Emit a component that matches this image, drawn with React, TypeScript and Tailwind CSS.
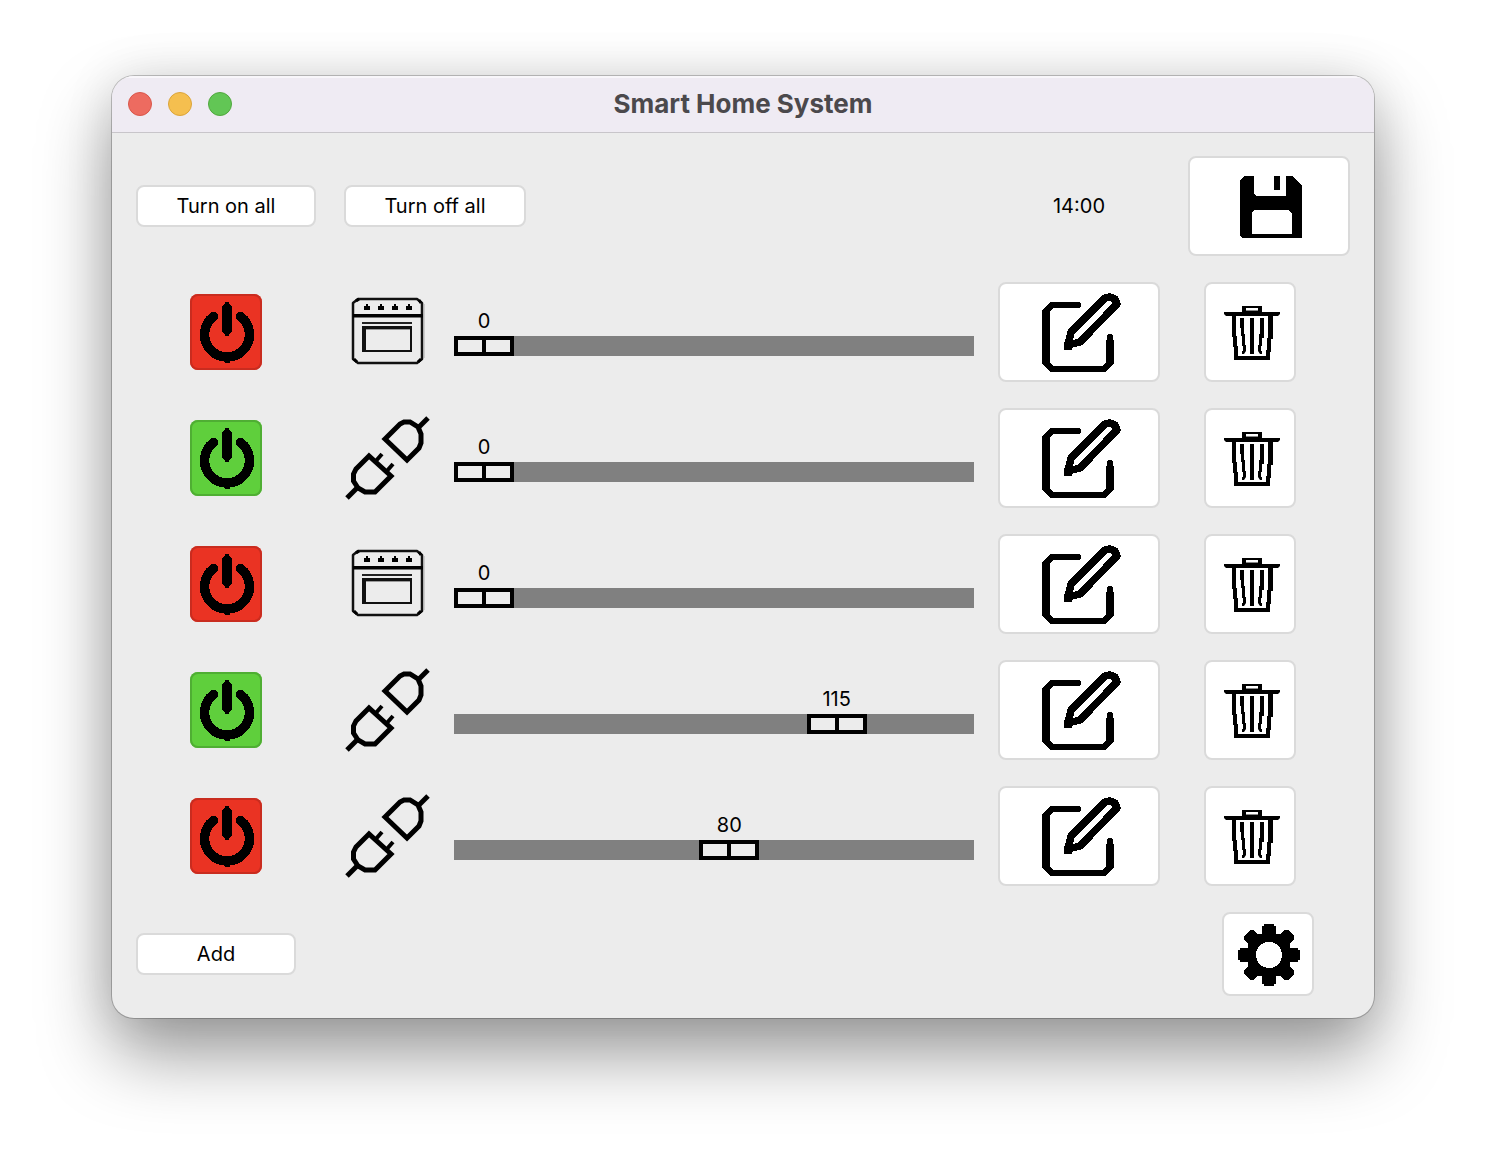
import { useState } from "react";

type Device = { id: number; kind: "oven" | "plug"; on: boolean; value: number };

const MAX = 150;

const INITIAL: Device[] = [
  { id: 1, kind: "oven", on: false, value: 0 },
  { id: 2, kind: "plug", on: true, value: 0 },
  { id: 3, kind: "oven", on: false, value: 0 },
  { id: 4, kind: "plug", on: true, value: 115 },
  { id: 5, kind: "plug", on: false, value: 80 },
];

const BUTTON = "block rounded-lg border-2 border-[#dadada] bg-white";
const GRID = "grid grid-cols-[184px_86px_minmax(0,1fr)_162px_166px] gap-x-6";

function PowerIcon() {
  return (
    <svg viewBox="0 0 72 76" className="h-[76px] w-[72px]" shapeRendering="crispEdges" aria-hidden="true">
      <path d="M23.5 22.5A22.5 22.5 0 1 0 50.5 22.5" fill="none" stroke="#000" strokeWidth="9.5" strokeLinecap="round" />
      <path d="M32 12L35 10V8H39V10L42 12V38L39 40V42H35V40L32 38Z" />
      <path d="M35 66H40V69H35Z" />
    </svg>
  );
}

function OvenIcon() {
  return (
    <svg viewBox="0 0 86 100" className="h-[100px] w-[86px]" aria-hidden="true">
      <path d="M14 17H73L78 21V77L73 81H14L9 77V21Z" fill="none" stroke="#111" strokeWidth="2.5" strokeLinejoin="round" />
      <path d="M12 19L15 17M75 18L77 21M10 77L13 80M74 80L77 77" stroke="#000" strokeWidth="3" />
      <path d="M80 22V76" stroke="#aaa" strokeWidth="1" />
      <path d="M9 32H79V35.5H9Z" />
      <path d="M18 40H68V42H18Z" fill="#222" />
      <path fillRule="evenodd" d="M18 44H68V70H18ZM22 47V68H66V47Z" fill="#111" />
      <path d="M22 47H66V48H22Z" fill="#999" />
      {[23, 37, 51, 65].map((x) => (
        <path key={x} transform={`translate(${x} 0)`} d="M-1 22H1V24H3V28H-3V24H-1Z" />
      ))}
    </svg>
  );
}

function PlugIcon() {
  return (
    <svg viewBox="0 0 86 100" className="h-[100px] w-[86px]" fill="none" stroke="#000" strokeWidth="5" aria-hidden="true">
      <path d="M41 31L56 16L60 14H66L74 19L77 26V35L75 40L63 52Z" />
      <path d="M74 20L84 10" />
      <path d="M25 48L12 61L9.5 66V73L14 80L21 84H31L47 68Z" />
      <path d="M14 79L3 90" />
      <path d="M31 54L38 46M42 64L49 56" strokeWidth="4" />
    </svg>
  );
}

function EditIcon() {
  return (
    <svg viewBox="2 2 158 96" className="h-24 w-full" fill="none" stroke="#000" shapeRendering="crispEdges" aria-hidden="true">
      <path d="M80 23H54L48 29V81L54 87H106L112 81V55" strokeWidth="6.5" strokeLinecap="round" strokeLinejoin="round" />
      <path d="M48 28V82M112 58V82" strokeWidth="8" />
      <path d="M73 50L107 16L112 15L117 17L119 22L82 60L70 63Z" strokeWidth="7.5" strokeLinejoin="round" />
      <path d="M66 60H74V68H66Z" fill="#000" stroke="none" />
    </svg>
  );
}

function TrashIcon() {
  return (
    <svg viewBox="2 2 88 96" className="h-24 w-[88px]" aria-hidden="true">
      <path fillRule="evenodd" d="M38 24H58V30H38ZM42 26V29H54V26Z" />
      <path d="M42 28H54V29H42Z" fill="#888" />
      <path d="M20 30H76V32L74 34H22L20 32Z" />
      <path d="M28 33H32V54H33V64H34V74H62V68H63V56H64V33H69V57H67V70H66V78H30V65H29V55H28Z" />
      <path d="M46 36H50V72H46Z" />
      <path d="M36 36H40V52H41V63H42V69L40 72H38V69H39V64H38V54H37V46H36Z" />
      <path d="M60 36H56V52H55V63H54V69L56 72H58V69H57V64H58V56H60Z" />
    </svg>
  );
}

function SaveIcon() {
  return (
    <svg viewBox="2 2 158 96" className="h-24 w-full" shapeRendering="crispEdges" aria-hidden="true">
      <path fillRule="evenodd" d="M56 20H66V38L68 40H98V20H104L114 30V82H54L52 80V24ZM66 54L64 56V78H104V58L100 54Z" />
      <path d="M86 20H92V34H86Z" />
    </svg>
  );
}

const GEAR_SIDE = "M-7 -21L-7 -29H-5V-31H5V-29H7V-21H12L15 -25H19L25 -19V-15L21 -12V-7H0V0H-21V-21Z";

function GearIcon() {
  return (
    <svg viewBox="2 2 88 80" className="h-20 w-[88px]" shapeRendering="crispEdges" aria-hidden="true">
      <g transform="translate(47 43)">
        {[0, 90, 180, 270].map((a) => (
          <path key={a} transform={`rotate(${a})`} d={GEAR_SIDE} />
        ))}
        <circle r="13" fill="#fff" />
      </g>
    </svg>
  );
}

function DeviceRow({ device, onChange, onDelete }: { device: Device; onChange: (d: Device) => void; onDelete: () => void }) {
  const name = `${device.kind} ${device.id}`;
  return (
    <li className={GRID}>
      <div className="flex w-[180px] items-center justify-center">
        <button
          type="button"
          aria-label={`Power ${name}`}
          aria-pressed={device.on}
          onClick={() => onChange({ ...device, on: !device.on })}
          className={
            device.on
              ? "rounded-lg bg-[#5fcf3c] inset-ring-2 inset-ring-[#4fae33]"
              : "rounded-lg bg-[#ea3323] inset-ring-2 inset-ring-[#c92c1f]"
          }
        >
          <PowerIcon />
        </button>
      </div>
      {device.kind === "oven" ? <OvenIcon /> : <PlugIcon />}
      <div className="flex flex-col gap-[3px] pt-[27px]">
        <output
          htmlFor={`level-${device.id}`}
          className="w-[60px] text-center leading-6"
          style={{ marginLeft: `calc((100% - 60px) * ${device.value / MAX})` }}
        >
          {device.value}
        </output>
        <input
          id={`level-${device.id}`}
          type="range"
          min={0}
          max={MAX}
          value={device.value}
          aria-label={`Level ${name}`}
          onChange={(e) => onChange({ ...device, value: Number(e.target.value) })}
          className="block h-5 w-full appearance-none bg-[#808080] [&::-webkit-slider-thumb]:h-5 [&::-webkit-slider-thumb]:w-[60px] [&::-webkit-slider-thumb]:appearance-none [&::-webkit-slider-thumb]:border-4 [&::-webkit-slider-thumb]:border-black [&::-webkit-slider-thumb]:bg-[linear-gradient(to_right,#ececec_24px,#000_24px,#000_28px,#ececec_28px)]"
        />
      </div>
      <button type="button" aria-label={`Edit ${name}`} className={BUTTON}>
        <EditIcon />
      </button>
      <div className="pl-5">
        <button type="button" aria-label={`Delete ${name}`} onClick={onDelete} className={BUTTON}>
          <TrashIcon />
        </button>
      </div>
    </li>
  );
}

export default function App() {
  const [devices, setDevices] = useState(INITIAL);
  const setAll = (on: boolean) => setDevices(devices.map((d) => ({ ...d, on })));
  const add = () =>
    setDevices([...devices, { id: Math.max(0, ...devices.map((d) => d.id)) + 1, kind: "plug", on: false, value: 0 }]);

  return (
    <div className="min-h-screen bg-white px-28 pt-[76px] pb-[148px] font-['Inter','Liberation_Sans',sans-serif] text-xl text-black">
      <main className="overflow-hidden rounded-[22px] bg-[#ececec] shadow-[0_0_0_1px_rgba(0,0,0,0.22),0_36px_72px_rgba(0,0,0,0.4),0_0_50px_rgba(0,0,0,0.1)]">
        <header className="grid h-[57px] grid-cols-[1fr_auto_1fr] items-center border-b border-[#c8c5ca] bg-[#efebf3] px-4 inset-shadow-[0_2px_0_#f8f6fa]">
          <div className="flex gap-4">
            <button type="button" aria-label="Close" className="size-6 rounded-full border border-[#d9564a] bg-[#ed6b60]" />
            <button type="button" aria-label="Minimize" className="size-6 rounded-full border border-[#dba43a] bg-[#f5bf4f]" />
            <button type="button" aria-label="Zoom" className="size-6 rounded-full border border-[#51a73e] bg-[#62c655]" />
          </div>
          <h1 className="text-[26px] leading-8 font-bold text-[#4b494c]">Smart Home System</h1>
        </header>

        <div className="flex flex-col gap-[26px] px-6 pt-[23px] pb-[22px]">
          <div className={`${GRID} items-center`}>
            <button type="button" onClick={() => setAll(true)} className={`${BUTTON} h-[42px] w-[180px]`}>
              Turn on all
            </button>
            <div className="col-span-2">
              <button type="button" onClick={() => setAll(false)} className={`${BUTTON} h-[42px] w-[182px]`}>
                Turn off all
              </button>
            </div>
            <time className="text-center">14:00</time>
            <div className="pl-1">
              <button type="button" aria-label="Save" className={`${BUTTON} w-full`}>
                <SaveIcon />
              </button>
            </div>
          </div>

          <ul className="flex flex-col gap-[26px]">
            {devices.map((d) => (
              <DeviceRow
                key={d.id}
                device={d}
                onChange={(next) => setDevices(devices.map((x) => (x.id === next.id ? next : x)))}
                onDelete={() => setDevices(devices.filter((x) => x.id !== d.id))}
              />
            ))}
          </ul>

          <div className="flex items-center justify-between pr-9">
            <button type="button" onClick={add} className={`${BUTTON} h-[42px] w-40`}>
              Add
            </button>
            <button type="button" aria-label="Settings" className={BUTTON}>
              <GearIcon />
            </button>
          </div>
        </div>
      </main>
    </div>
  );
}
